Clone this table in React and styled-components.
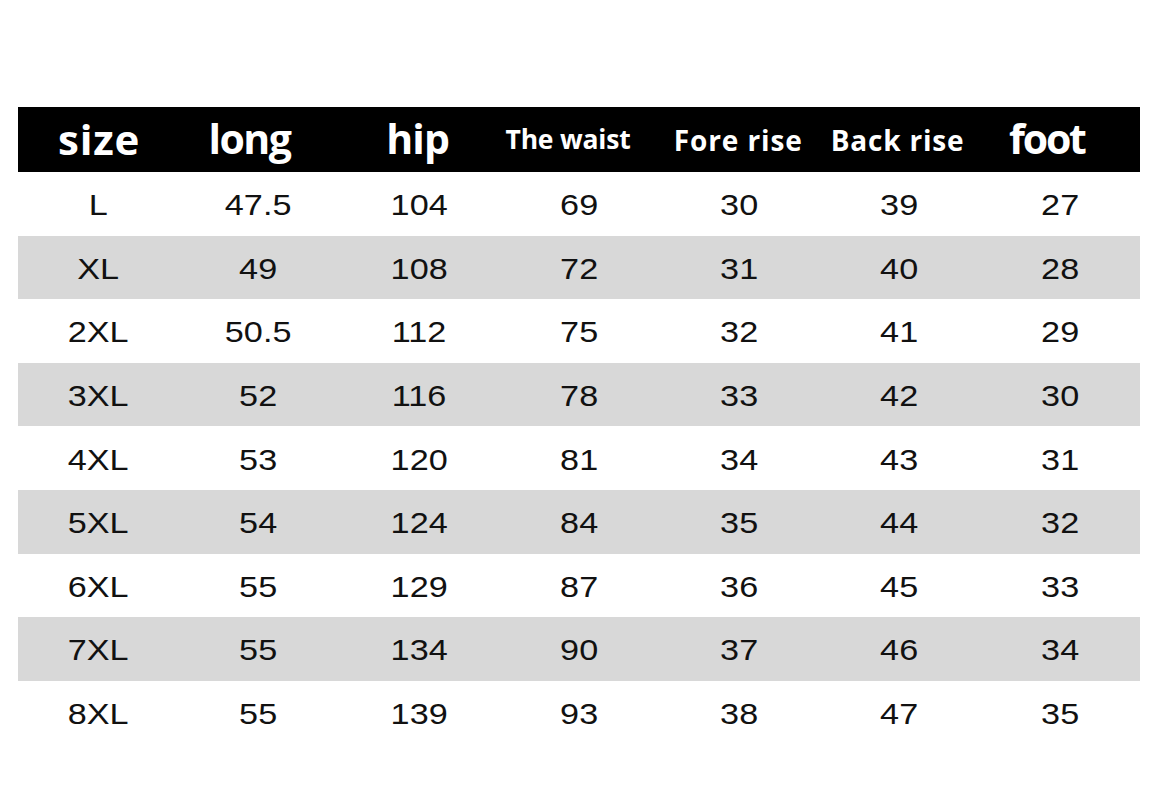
import React from 'react'
import styled, { createGlobalStyle } from 'styled-components'

const HEADERS = [
  { label: 'size', size: 42, spacing: 0.8, shift: 1 },
  { label: 'long', size: 41, spacing: -1.5, shift: -9 },
  { label: 'hip', size: 41, spacing: -0.8, shift: -1 },
  { label: 'The waist', size: 26.5, spacing: -0.2, shift: -11 },
  { label: 'Fore rise', size: 28, spacing: 0.9, shift: -1 },
  { label: 'Back rise', size: 28, spacing: 0.8, shift: -2 },
  { label: 'foot', size: 41, spacing: -2.2, shift: -13 }
]

const ROWS = [
  ['L', '47.5', '104', '69', '30', '39', '27'],
  ['XL', '49', '108', '72', '31', '40', '28'],
  ['2XL', '50.5', '112', '75', '32', '41', '29'],
  ['3XL', '52', '116', '78', '33', '42', '30'],
  ['4XL', '53', '120', '81', '34', '43', '31'],
  ['5XL', '54', '124', '84', '35', '44', '32'],
  ['6XL', '55', '129', '87', '36', '45', '33'],
  ['7XL', '55', '134', '90', '37', '46', '34'],
  ['8XL', '55', '139', '93', '38', '47', '35']
]

function App() {
  return (
    <>
      <GlobalStyle />
      <Page>
        <Table>
          <HeaderRow>
            {HEADERS.map(h => (
              <HeaderCell
                key={h.label}
                size={h.size}
                spacing={h.spacing}
                shift={h.shift}
              >
                {h.label}
              </HeaderCell>
            ))}
          </HeaderRow>
          {ROWS.map((row, i) => (
            <Row key={row[0]} striped={i % 2 === 1}>
              {row.map((value, j) => (
                <Cell key={j}>{value}</Cell>
              ))}
            </Row>
          ))}
        </Table>
      </Page>
    </>
  )
}

const GlobalStyle = createGlobalStyle`
  html, body {
    margin: 0;
    padding: 0;
    background: #ffffff;
  }
`

const Page = styled.div`
  width: 1153px;
  height: 801px;
  padding: 107px 13px 0 18px;
  box-sizing: border-box;
  background: #ffffff;
`

const Table = styled.div`
  display: flex;
  flex-direction: column;
  width: 1122px;
`

const HeaderRow = styled.div`
  display: grid;
  grid-template-columns: repeat(7, 1fr);
  align-items: center;
  height: 65px;
  background: #000000;
`

const HeaderCell = styled.div`
  font-family: 'Open Sans', 'Noto Sans', sans-serif;
  font-weight: 700;
  font-size: ${props => props.size}px;
  letter-spacing: ${props => props.spacing}px;
  color: #ffffff;
  text-align: center;
  line-height: 1;
  transform: translateX(${props => props.shift}px);
  padding-bottom: ${props => (props.size > 35 ? '2px' : '0')};
`

const Row = styled.div`
  display: grid;
  grid-template-columns: repeat(7, 1fr);
  align-items: center;
  height: 63.6px;
  background: ${props => (props.striped ? '#d8d8d8' : '#ffffff')};
`

const Cell = styled.div`
  font-family: 'Liberation Sans', Arial, sans-serif;
  font-size: 30px;
  color: #111111;
  text-align: center;
  line-height: 1;
  padding-top: 3px;
  transform: scaleX(1.14);
`

export default App
